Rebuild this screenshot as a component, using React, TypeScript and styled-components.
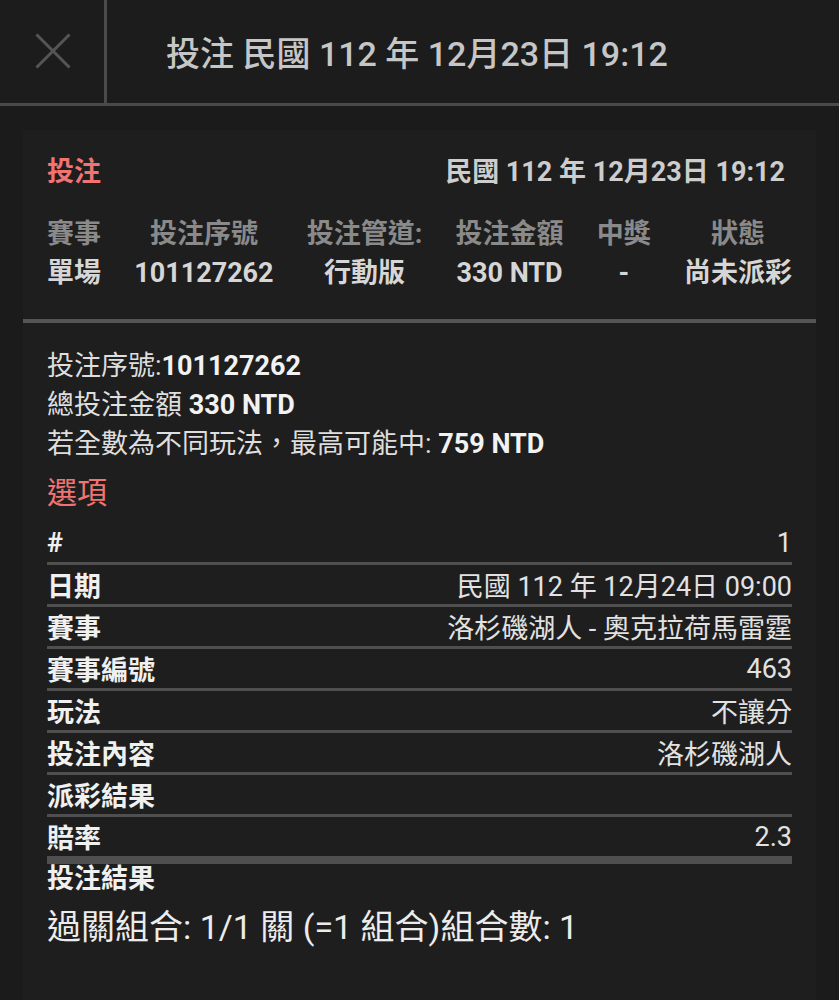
import styled, { createGlobalStyle } from "styled-components"

const GlobalStyle = createGlobalStyle`
  html, body {
    margin: 0;
    padding: 0;
    background: #1b1b1b;
  }
  body {
    font-family: Roboto, "Noto Sans CJK TC", "Noto Sans", sans-serif;
    color: #dcdcdc;
  }
`

const Page = styled.div`
  width: 839px;
  height: 1000px;
  overflow: hidden;
  background: #1b1b1b;
`

const TopBar = styled.header`
  display: flex;
  height: 103px;
  border-bottom: 3px solid #4a4a4a;
  background: #1c1c1c;
`

const CloseButton = styled.button`
  width: 107px;
  height: 103px;
  padding: 0 0 2px 2px;
  border: none;
  border-right: 3px solid #4a4a4a;
  background: transparent;
  display: flex;
  align-items: center;
  justify-content: center;
  cursor: pointer;
`

const TopTitle = styled.h1`
  margin: 0;
  padding-left: 59px;
  display: flex;
  align-items: center;
  font-size: 34px;
  font-weight: 500;
  color: #c6c6c6;
  white-space: pre;
`

const Card = styled.section`
  margin: 24px 23px 0 23px;
  padding: 19px 0 30px;
  background: #1e1e1e;
  min-height: 900px;
`

const Inner = styled.div`
  padding: 0 24px;
`

const SummaryHead = styled.div`
  display: flex;
  justify-content: space-between;
  align-items: center;
  height: 40px;
  padding-right: 7px;
  font-size: 27px;
  font-weight: 700;
`

const RedTitle = styled.span<{ $size?: number; $bold?: boolean }>`
  color: #f07472;
  font-size: ${(p) => p.$size ?? 27}px;
  font-weight: ${(p) => (p.$bold ? 700 : 400)};
`

const DateText = styled.span`
  color: #cdcdcd;
  white-space: pre;
`

const ColumnGrid = styled.div`
  display: grid;
  grid-template-columns: repeat(6, auto);
  justify-content: space-between;
  justify-items: center;
  margin-top: 26px;
  font-size: 27px;
  font-weight: 700;
`

const Cell = styled.div<{ $head?: boolean }>`
  height: 39px;
  line-height: 39px;
  color: ${(p) => (p.$head ? "#8a8a8a" : "#d6d6d6")};
  white-space: nowrap;
`

const Divider = styled.hr`
  margin: 26px 0 0 0;
  border: none;
  height: 4px;
  background: #555555;
`

const InfoBlock = styled.div`
  margin-top: 24px;
  font-size: 27px;
  color: #dedede;
`

const InfoLine = styled.div`
  height: 39px;
  line-height: 39px;
  white-space: pre;

  b {
    font-weight: 700;
    color: #f2f2f2;
  }
`

const SectionTitle = styled.div`
  margin-top: 9px;
  height: 40px;
  line-height: 40px;
`

const OptionTable = styled.div`
  margin-top: 10px;
  font-size: 27px;
`

const OptionRow = styled.div<{ $thick?: boolean }>`
  display: flex;
  justify-content: space-between;
  align-items: center;
  height: 39px;
  border-bottom: ${(p) => (p.$thick ? 8 : 3)}px solid #4f4f4f;
`

const Label = styled.span`
  font-weight: 700;
  color: #f0f0f0;
`

const Value = styled.span`
  color: #e2e2e2;
  white-space: pre;
`

const ResultTitle = styled.div`
  height: 30px;
  line-height: 30px;
  font-size: 27px;
  font-weight: 700;
  color: #f0f0f0;
`

const ComboLine = styled.div`
  margin-top: 10px;
  height: 46px;
  line-height: 46px;
  font-size: 34px;
  color: #ececec;
  white-space: pre;
`

const columns = [
  ["賽事", "單場"],
  ["投注序號", "101127262"],
  ["投注管道:", "行動版"],
  ["投注金額", "330 NTD"],
  ["中獎", "-"],
  ["狀態", "尚未派彩"],
]

const options: { label: string; value: string }[] = [
  { label: "#", value: "1" },
  { label: "日期", value: "民國 112 年 12月24日 09:00" },
  { label: "賽事", value: "洛杉磯湖人 - 奧克拉荷馬雷霆" },
  { label: "賽事編號", value: "463" },
  { label: "玩法", value: "不讓分" },
  { label: "投注內容", value: "洛杉磯湖人" },
  { label: "派彩結果", value: "" },
  { label: "賠率", value: "2.3" },
]

function CloseIcon() {
  return (
    <svg width="36" height="36" viewBox="0 0 36 36">
      <path d="M1.5 1.5 L34.5 34.5 M34.5 1.5 L1.5 34.5" stroke="#555" strokeWidth="3" fill="none" />
    </svg>
  )
}

export default function App() {
  return (
    <Page>
      <GlobalStyle />
      <TopBar>
        <CloseButton aria-label="close">
          <CloseIcon />
        </CloseButton>
        <TopTitle>投注 民國 112 年 12月23日 19:12</TopTitle>
      </TopBar>

      <Card>
        <Inner>
          <SummaryHead>
            <RedTitle $bold>投注</RedTitle>
            <DateText>民國 112 年 12月23日 19:12</DateText>
          </SummaryHead>
          <ColumnGrid>
            {columns.map(([h]) => (
              <Cell key={h} $head>
                {h}
              </Cell>
            ))}
            {columns.map(([h, v]) => (
              <Cell key={h + "v"}>{v}</Cell>
            ))}
          </ColumnGrid>
        </Inner>

        <Divider />

        <Inner>
          <InfoBlock>
            <InfoLine>
              投注序號:<b>101127262</b>
            </InfoLine>
            <InfoLine>
              總投注金額 <b>330 NTD</b>
            </InfoLine>
            <InfoLine>
              若全數為不同玩法，最高可能中: <b>759 NTD</b>
            </InfoLine>
          </InfoBlock>

          <SectionTitle>
            <RedTitle $size={30}>選項</RedTitle>
          </SectionTitle>

          <OptionTable>
            {options.map((o, i) => (
              <OptionRow key={o.label + i} $thick={i === options.length - 1}>
                <Label>{o.label}</Label>
                <Value>{o.value}</Value>
              </OptionRow>
            ))}
          </OptionTable>

          <ResultTitle>投注結果</ResultTitle>
          <ComboLine>過關組合: 1/1 關 (=1 組合)組合數: 1</ComboLine>
        </Inner>
      </Card>
    </Page>
  )
}
